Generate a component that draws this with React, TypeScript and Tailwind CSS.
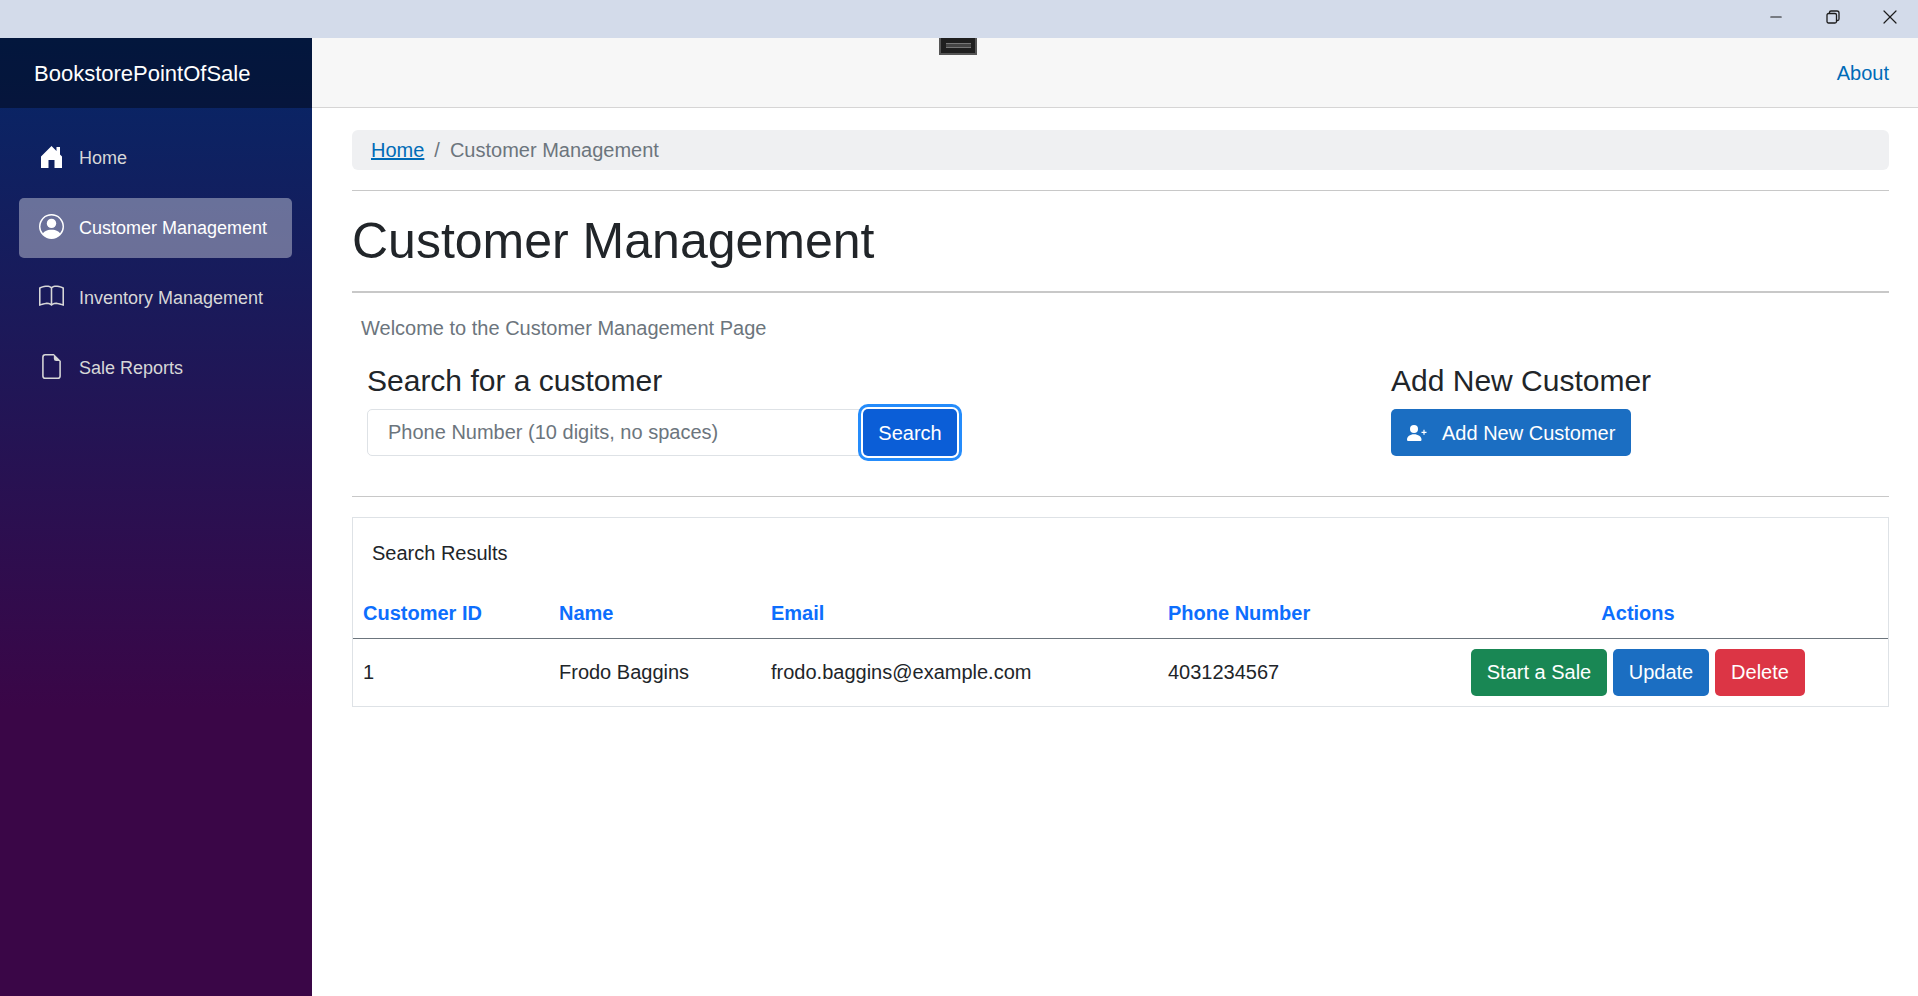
import { Minus, X } from "lucide-react";
import { BsBook, BsFileEarmark, BsPersonCircle } from "react-icons/bs";

function HomeIcon() {
  return (
    <svg width="21" height="23" viewBox="0 0 21 23" fill="currentColor">
      <path d="M0 11.5 10.5 1l5 5V2H19v7.5l2 2V23h-7.5v-8h-6v8H0Z" />
    </svg>
  );
}

function AddUserIcon() {
  return (
    <svg width="20" height="16" viewBox="0 0 20 16" fill="currentColor" className="mr-[15px]">
      <circle cx="7" cy="4" r="4" />
      <path d="M0 14.500C0 11.500 3 9.200 7 9.200S14.500 11.500 14.500 14.500c0 1-.5 1.500-1.500 1.500H1.500C.5 16 0 15.500 0 14.500Z" />
      <path d="M14.500 7.300h5M17 4.800v5" stroke="currentColor" strokeWidth="1.200" fill="none" />
    </svg>
  );
}

const navItems = [
  { label: "Home", icon: <HomeIcon />, active: false },
  { label: "Customer Management", icon: <BsPersonCircle size={25} />, active: true },
  { label: "Inventory Management", icon: <BsBook size={25} />, active: false },
  { label: "Sale Reports", icon: <BsFileEarmark size={25} />, active: false },
];

function TitleBar() {
  return (
    <div className="flex h-[38px] shrink-0 items-center justify-end bg-[#d3dbea] pb-[4px] text-[#1c1c1c]">
      <div className="flex w-[57px] justify-center"><Minus size={18} strokeWidth={1.4} /></div>
      <div className="flex w-[57px] justify-center">
        <svg width="14" height="14" viewBox="0 0 14 14" fill="none" stroke="currentColor" strokeWidth="1.3">
          <rect x="1" y="3.5" width="9.5" height="9.5" rx="1.5" />
          <path d="M3.5 3.500V2.500a1.500 1.500 0 0 1 1.500-1.500h6a2 2 0 0 1 2 2v6a1.500 1.500 0 0 1-1.500 1.500h-1" />
        </svg>
      </div>
      <div className="flex w-[57px] justify-center"><X size={24} strokeWidth={1.2} /></div>
    </div>
  );
}

function Sidebar() {
  return (
    <aside className="flex w-[312px] shrink-0 flex-col bg-[linear-gradient(180deg,#052767_0%,#3a0647_70%)]">
      <div className="flex h-[70px] shrink-0 items-center bg-black/40 pl-[34px] text-[22px] text-white">BookstorePointOfSale</div>
      <nav className="flex flex-col gap-[10px] pl-[19px] pr-[20px] pt-[20px]">
        {navItems.map((item) => (
          <a
            key={item.label}
            className={`flex h-[60px] items-center rounded-[5px] pl-[20px] text-[18px] ${item.active ? "bg-white/[0.37] text-white" : "text-[#d7d7d7]"}`}
          >
            <span className={`mb-[3px] mr-[15px] flex w-[25px] justify-center ${item.label === "Home" ? "text-white" : ""}`}>{item.icon}</span>
            {item.label}
          </a>
        ))}
      </nav>
    </aside>
  );
}

function SearchSection() {
  return (
    <div className="flex pl-[15px] pt-[21px]">
      <div className="w-[1024px]">
        <h4 className="text-[30px] leading-[33px] text-[#212529]">Search for a customer</h4>
        <div className="mt-[12px] flex w-[590px]">
          <input
            className="h-[47px] min-w-0 flex-1 rounded-l-[5px] border border-[#dee2e6] bg-white pl-[20px] text-[20px] outline-none placeholder:text-[#6c757d]"
            placeholder="Phone Number (10 digits, no spaces)"
          />
          <button className="relative z-10 h-[47px] w-[94px] rounded-[5px] bg-[#0b5ed7] text-[20px] text-white shadow-[0_0_0_2px_#fff,0_0_0_5px_#258cfb]">Search</button>
        </div>
      </div>
      <div>
        <h4 className="text-[30px] leading-[33px] text-[#212529]">Add New Customer</h4>
        <button className="mt-[12px] flex h-[47px] w-[240px] items-center rounded-[5px] bg-[#1b6ec2] pl-[16px] text-[20px] text-white">
          <AddUserIcon />
          Add New Customer
        </button>
      </div>
    </div>
  );
}

function ResultsCard() {
  return (
    <div className="mt-[20px] h-[190px] border border-[#dee2e6] bg-white">
      <div className="pl-[19px] pt-[20px] text-[20px] leading-[30px] text-[#212529]">Search Results</div>
      <table className="mt-[21px] w-full table-fixed border-collapse text-left text-[20px] text-[#212529]">
        <colgroup>
          <col className="w-[196px]" />
          <col className="w-[212px]" />
          <col className="w-[397px]" />
          <col className="w-[230px]" />
          <col />
        </colgroup>
        <thead>
          <tr className="h-[49px] border-b border-[#6c757d] font-bold text-[#0d6efd]">
            <th className="pl-[10px]">Customer ID</th>
            <th className="pl-[10px]">Name</th>
            <th className="pl-[10px]">Email</th>
            <th className="pl-[10px]">Phone Number</th>
            <th className="text-center">Actions</th>
          </tr>
        </thead>
        <tbody>
          <tr className="h-[68px]">
            <td className="pl-[10px]">1</td>
            <td className="pl-[10px]">Frodo Baggins</td>
            <td className="pl-[10px]">frodo.baggins@example.com</td>
            <td className="pl-[10px]">4031234567</td>
            <td>
              <div className="flex justify-center gap-[6px] text-white">
                <button className="h-[47px] w-[136px] rounded-[5px] bg-[#198754]">Start a Sale</button>
                <button className="h-[47px] w-[96px] rounded-[5px] bg-[#1b6ec2]">Update</button>
                <button className="h-[47px] w-[90px] rounded-[5px] bg-[#dc3545]">Delete</button>
              </div>
            </td>
          </tr>
        </tbody>
      </table>
    </div>
  );
}

export default function App() {
  return (
    <div className="relative flex h-[996px] w-[1918px] flex-col overflow-hidden bg-white font-['Liberation_Sans',Arial,sans-serif]">
      <TitleBar />
      <div className="flex min-h-0 flex-1">
        <Sidebar />
        <main className="min-w-0 flex-1">
          <div className="flex h-[70px] items-center justify-end border-b border-[#d6d5d5] bg-[#f7f7f7] pr-[29px] text-[20px] text-[#006bb7]">
            <a>About</a>
          </div>
          <div className="pl-[40px] pr-[29px] pt-[22px]">
            <div className="flex h-[40px] items-center rounded-[6px] bg-[#eff0f2] pl-[19px] text-[20px] text-[#6c757d]">
              <a className="text-[#006bb7] underline">Home</a>
              <span className="px-[10px]">/</span>
              <span>Customer Management</span>
            </div>
            <hr className="mt-[20px] border-t border-[#c8c8c8]" />
            <h1 className="mt-[21px] text-[50px] leading-[58px] text-[#212529]">Customer Management</h1>
            <hr className="mt-[21px] border-t-2 border-[#c8c8c8]" />
            <p className="mt-[20px] pl-[9px] text-[20px] leading-[30px] text-[#6c757d]">Welcome to the Customer Management Page</p>
            <SearchSection />
            <hr className="mt-[40px] border-t border-[#c8c8c8]" />
            <ResultsCard />
          </div>
        </main>
      </div>
      <div className="absolute left-[939px] top-[38px] flex h-[17px] w-[38px] items-center justify-center border-2 border-t-0 border-[#555] bg-[#1f1f1f]">
        <div className="h-[5px] w-[25px] border-y border-[#777] bg-[#444]" />
      </div>
    </div>
  );
}
